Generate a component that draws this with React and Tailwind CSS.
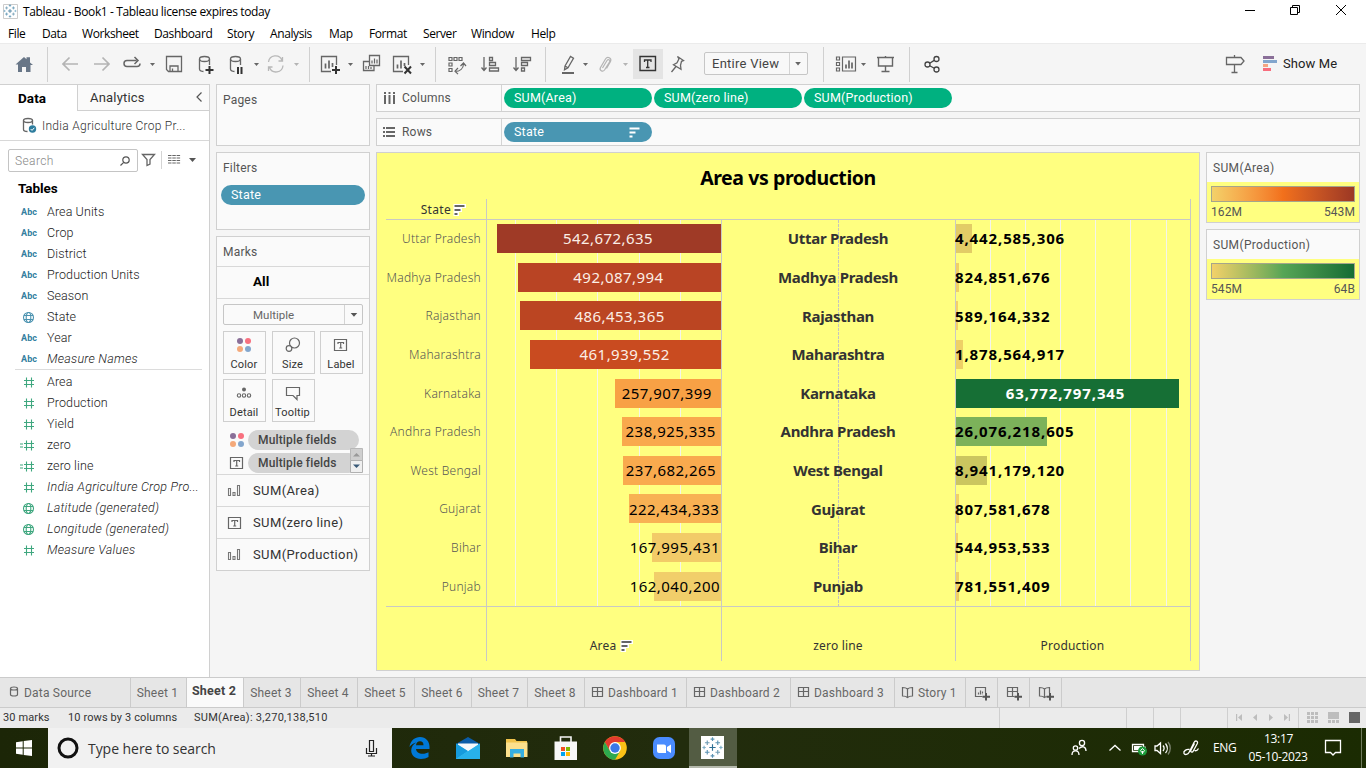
import React from "react";

const cx = (...a) => a.filter(Boolean).join(" ");

/* Icon cell whose drawing coordinates are window coordinates. */
function Cell({ x, y = 43, w, h = 41, className, children }) {
  return (
    <svg
      width={w}
      height={h}
      viewBox={`${x} ${y} ${w} ${h}`}
      fill="none"
      stroke="#666"
      strokeWidth="1.3"
      className={cx("block shrink-0", className)}
    >
      {children}
    </svg>
  );
}

const Caret = ({ x, y = 64, c = "#666" }) => (
  <path d={`M${x - 2.5} ${y - 1}h5l-2.5 3z`} fill={c} stroke="none" />
);
const Sep = ({ x }) => <path d={`M${x}.5 47v35`} stroke="#d0d0d0" strokeWidth="1" />;

function TableauMark({ x, y, s = 1 }) {
  const plus = (px, py, r, c) => (
    <path key={`${px},${py}`} d={`M${px - r} ${py}h${2 * r}M${px} ${py - r}v${2 * r}`} stroke={c} strokeWidth="1.1" />
  );
  return (
    <g transform={`translate(${x} ${y}) scale(${s})`}>
      {plus(0, 0, 3, "#2f6f94")}
      {plus(-5, -4.5, 2.2, "#6f9cb4")}
      {plus(5, -4.5, 2.2, "#5b93b3")}
      {plus(-5, 4.5, 2.2, "#5b93b3")}
      {plus(5, 4.5, 2.2, "#6f9cb4")}
      {plus(0, -8, 1.8, "#5b93b3")}
      {plus(0, 8, 1.8, "#5b93b3")}
      {plus(-8, 0, 1.6, "#7fb0c8")}
      {plus(8, 0, 1.6, "#7fb0c8")}
    </g>
  );
}

function TitleBar() {
  return (
    <div className="flex h-[23px] items-center bg-white">
      <Cell x={0} y={0} w={23} h={23}>
        <path d="M3.5 4.5h14v14h-14z" fill="#fff" stroke="#ccc" strokeWidth="1" />
        <TableauMark x={10} y={11} s={0.68} />
      </Cell>
      <span className="pt-[1px] text-[12px] tracking-[-0.37px] text-black">Tableau - Book1 - Tableau license expires today</span>
      <Cell x={1230} y={0} w={136} h={23} className="ml-auto">
        <g stroke="#000" strokeWidth="1">
          <path d="M1245 10.5h10" />
          <path d="M1290.500 7.500h7v7h-7zM1292.500 7v-1.500h7v7h-1.500" />
          <path d="M1336 5l10 10M1346 5l-10 10" />
        </g>
      </Cell>
    </div>
  );
}

const MENU = [
  ["File", "w-[34px]"],
  ["Data", "w-[40px]"],
  ["Worksheet", "w-[72px]"],
  ["Dashboard", "w-[73px]"],
  ["Story", "w-[43px]"],
  ["Analysis", "w-[59px]"],
  ["Map", "w-[40px]"],
  ["Format", "w-[54px]"],
  ["Server", "w-[48px]"],
  ["Window", "w-[60px]"],
  ["Help", "w-[40px]"],
];

function MenuBar() {
  return (
    <div className="flex h-[20px] items-center bg-white pl-2 pt-[2px] text-[12px] tracking-[-0.4px] text-black">
      {MENU.map(([t, w]) => (
        <span key={t} className={cx("shrink-0", w)}>{t}</span>
      ))}
    </div>
  );
}

function Toolbar() {
  return (
    <div className="flex h-[41px] border-t border-[#ebebeb] bg-[#f5f5f5]">
      <Cell x={0} y={44} h={40} w={62}>
        <path d="M15.500 64.500L24 57l2.500 2.200v-2h3.500v5.200l3 2.600h-2.500v7h-4.500v-5h-4v5h-4v-7.500z" fill="#687687" stroke="none" />
        <Sep x={47} />
      </Cell>
      <Cell x={62} y={44} h={40} w={56}>
        <path d="M78 64H63M69.500 57.500L63 64l6.500 6.500M94 64h15M102.500 57.500L109 64l-6.500 6.500" stroke="#b4b4b4" strokeWidth="1.7" />
      </Cell>
      <Cell x={118} y={44} h={40} w={44}>
        <path d="M131 66.500h-4a3 3 0 010-6h9.500M130 66.500h7a3 3 0 003-3M134.500 57l3.500 3.500-3.500 3.500" strokeWidth="1.500" />
        <Caret x={152.500} />
      </Cell>
      <Cell x={162} y={44} h={40} w={30}>
        <path d="M166.500 56.500h15v15h-13l-2-2zM170 71v-5h8v5M172.500 68.500v3" />
      </Cell>
      <Cell x={192} y={44} h={40} w={30}>
        <ellipse cx="204.500" cy="59" rx="5" ry="2.500" />
        <path d="M199.500 59v10c0 1.400 1.600 2.300 4 2.500M209.500 59v6" />
        <path d="M209.500 66v8M205.500 70h8" stroke="#333" strokeWidth="2" />
      </Cell>
      <Cell x={222} y={44} h={40} w={42}>
        <ellipse cx="235.500" cy="59" rx="5" ry="2.500" />
        <path d="M230.500 59v10c0 1.400 1.600 2.300 4 2.500M240.500 59v6" />
        <path d="M238 67v7M241.500 67v7" stroke="#333" strokeWidth="2" />
        <Caret x={256.500} />
      </Cell>
      <Cell x={264} y={44} h={40} w={50}>
        <path d="M268.500 62a7 7 0 0113.500-1.500M283 65.500a7 7 0 01-13.500 2M282.500 57v4h-4M268.500 71v-4h4" stroke="#b8b8b8" />
        <Caret x={296.500} c="#b4b4b4" />
        <Sep x={309} />
      </Cell>
      <Cell x={314} y={44} h={40} w={44}>
        <path d="M331 71.500h-9.500v-15h15V65" />
        <path d="M325.500 68.500v-5M329 68.500v-8M332.500 67v-4" strokeWidth="1.700" />
        <path d="M336 66v8M332 70h8" stroke="#333" strokeWidth="2" />
        <Caret x={350.500} />
      </Cell>
      <Cell x={358} y={44} h={40} w={28}>
        <path d="M369.500 55.500h10v10h-10zM369 61.500h-5.500v9h10.500v-5" />
        <path d="M372 63.500v-3M374.500 63.500v-5M377 63.500v-4M366 69v-3M368.500 69v-3M371 69v-2" strokeWidth="1.200" />
      </Cell>
      <Cell x={386} y={44} h={40} w={58}>
        <path d="M403 71.500h-9.500v-15h15V65" />
        <path d="M397.500 68.500v-4M401 68.500v-8M404.500 66v-3" strokeWidth="1.700" />
        <path d="M404.500 66.500l6.500 7M411 66.500l-6.500 7" stroke="#333" strokeWidth="2" />
        <Caret x={422.500} />
        <Sep x={435} />
      </Cell>
      <Cell x={444} y={44} h={40} w={30}>
        <path d="M449 57.500h3v3h-3zM454 57.500h3v3h-3zM459 57.500h3v3h-3zM449 63h3v3h-3zM449 68.500h3v3h-3zM455 71.500c5 0 8.500-3 8.500-8M458 68l-3 3.200 3 3M460.500 66l3-3 2.500 3" strokeWidth="1.200" />
      </Cell>
      <Cell x={474} y={44} h={40} w={32}>
        <path d="M484 57v13M481.500 67.500l2.500 3 2.500-3M489.500 57.500h3v3h-3zM489.500 62.500h6v3h-6zM489.500 68h9v3h-9z" />
      </Cell>
      <Cell x={506} y={44} h={40} w={44}>
        <path d="M516 57v13M513.500 67.500l2.500 3 2.500-3M521.500 57.500h9v3h-9zM521.500 62.500h6v3h-6zM521.500 68h3v3h-3z" />
        <Sep x={545} />
      </Cell>
      <Cell x={550} y={44} h={40} w={42}>
        <path d="M565 66l5.500-9.500 3 1.800-5.500 9.500-3.500 2zM565 66l3 1.800" />
        <path d="M562 73h12" strokeWidth="2" />
        <Caret x={585.500} />
      </Cell>
      <Cell x={592} y={44} h={40} w={41}>
        <path d="M602.500 68l4.500-7.500c1.200-1.800 3.500-.5 2.500 1.500l-5 8c-1.800 2.500-5.500.5-4-2.500l5-8.500c2-3 6.500-1 5 2.500l-4 7" stroke="#b4b4b4" strokeWidth="1.200" />
        <Caret x={625.500} c="#b4b4b4" />
      </Cell>
      <div className="mt-[5px] h-[30px]">
        <Cell x={633} y={49} h={30} w={30} className="bg-[#e4e4e4]">
          <path d="M640 56.500h15.500v14H640z" stroke="#333" strokeWidth="1.400" />
          <path d="M644.500 62v-2h6.500v2M647.700 60v7.500M646 67.500h3.500" stroke="#333" />
        </Cell>
      </div>
      <Cell x={663} y={44} h={40} w={41}>
        <path d="M677.500 56.500l6 4-2 .8-1 4 .5 4-7.500-4.500 3.500-2 2-4zM676 66.500l-4.500 5.500" />
      </Cell>
      <div className="mt-[8px] flex h-[23px] w-[104px] rounded-[2px] border border-[#c6c6c6] bg-[#f8f8f8]">
        <span className="flex h-full w-[84px] items-center pl-[7px] text-[13px] tracking-[0.25px] text-[#444]">Entire View</span>
        <Cell x={789} y={53} w={18} h={21} className="border-l border-[#d4d4d4]">
          <path d="M794.500 62h6l-3 3.500z" fill="#666" stroke="none" />
        </Cell>
      </div>
      <Cell x={808} y={44} h={40} w={64}>
        <Sep x={823} />
        <path d="M836.500 57h3v3h-3zM836.500 62.500h3v3h-3zM836.500 68h3v3h-3zM842.500 57h13v14h-13z" strokeWidth="1.200" />
        <path d="M846 68.500v-4M849 68.500v-8M852 68.500v-6" strokeWidth="1.700" />
        <Caret x={863.500} />
      </Cell>
      <Cell x={872} y={44} h={40} w={42}>
        <path d="M877 57.500h17M878.500 57.500v8.500h14v-8.500M885.500 66v5M881.500 71.500h8M885.500 56v1" strokeWidth="1.400" />
        <Sep x={909} />
      </Cell>
      <Cell x={914} y={44} h={40} w={40}>
        <circle cx="927.500" cy="64.500" r="2.500" stroke="#444" />
        <circle cx="936.500" cy="59" r="2.500" stroke="#444" />
        <circle cx="936.500" cy="69.500" r="2.500" stroke="#444" />
        <path d="M929.700 63.200l4.500-2.800M929.700 65.800l4.600 2.500" stroke="#444" />
      </Cell>
      <Cell x={1216} y={44} h={40} w={67} className="ml-auto">
        <path d="M1226.500 57.500h14.500l3 3.500-3 3.500h-14.500zM1234.500 55v2.500M1234.500 64.500v8M1231.500 72.500h6" />
        <path d="M1263 56h11v3h-11z" fill="#8a6f98" stroke="none" />
        <path d="M1263 60h14v3h-14z" fill="#83a6cd" stroke="none" />
        <path d="M1263 64h5v3h-5z" fill="#f4a582" stroke="none" />
        <path d="M1263 68h8v3h-8z" fill="#f86d7d" stroke="none" />
      </Cell>
      <span className="flex h-[40px] w-[83px] items-center text-[13px] tracking-[0.1px] text-[#222]">Show Me</span>
    </div>
  );
}

const FIELDS = [
  ["abc", "Area Units"],
  ["abc", "Crop"],
  ["abc", "District"],
  ["abc", "Production Units"],
  ["abc", "Season"],
  ["globe", "State"],
  ["abc", "Year"],
  ["abc", "Measure Names", true],
];
const MEASURES = [
  ["num", "Area"],
  ["num", "Production"],
  ["num", "Yield"],
  ["calc", "zero"],
  ["calc", "zero line"],
  ["num", "India Agriculture Crop Pro...", true],
  ["globe", "Latitude (generated)", true],
  ["globe", "Longitude (generated)", true],
  ["num", "Measure Values", true],
];

function FieldIcon({ kind, color }) {
  if (kind === "abc")
    return <span className="w-[29px] shrink-0 pl-[3px] pt-[3px] text-[9px] font-bold tracking-[0.1px] text-[#33809f]">Abc</span>;
  return (
    <svg width="29" height="20" viewBox="18 0 29 20" fill="none" stroke={color} strokeWidth="1.1" className="block shrink-0">
      {kind === "globe" ? (
        <>
          <circle cx="28.500" cy="10.500" r="5" />
          <ellipse cx="28.500" cy="10.500" rx="2.300" ry="5" />
          <path d="M24 8.500h9M24 12.500h9" />
        </>
      ) : (
        <path d="M26.500 5.500v10M31.500 5.500v10M24 8.500h10M24 12.500h10" />
      )}
      {kind === "calc" && <path d="M20 9h3M20 12h3" />}
    </svg>
  );
}

function FieldList({ items, color }) {
  return items.map(([kind, label, italic]) => (
    <div key={label} className="flex h-[21px] items-center pl-[18px]">
      <FieldIcon kind={kind} color={color} />
      <span className={cx("whitespace-nowrap pt-[2px] text-[12.5px] text-[#222] font-light", italic ? "italic tracking-[0.25px]" : "tracking-[0.1px]")}>{label}</span>
    </div>
  ));
}

function DataPane() {
  return (
    <div className="flex w-[210px] shrink-0 flex-col border-r border-t border-[#d0d0d0] bg-white">
      <div className="flex h-[26px]">
        <span className="flex w-[77px] items-center pl-[18px] text-[13.500px] font-bold tracking-[0.1px] text-black">Data</span>
        <div className="flex grow items-center border-b border-l border-[#d0d0d0] bg-[#fafafa] pl-[12px]">
          <span className="text-[13px] tracking-[0.2px] text-[#333]">Analytics</span>
          <svg width="8" height="12" viewBox="0 0 8 12" fill="none" stroke="#555" strokeWidth="1.200" className="mb-[2px] ml-auto mr-[6px]">
            <path d="M6.500 1.500L2 6l4.500 4.500" />
          </svg>
        </div>
      </div>
      <div className="flex h-[30px] items-center border-b border-[#d8d8d8]">
        <Cell x={0} y={111} w={42} h={29}>
          <ellipse cx="28" cy="120.500" rx="4.500" ry="2" />
          <path d="M23.500 120.500v9c0 1.200 1.500 2 4 2M32.500 120.500v4" />
          <circle cx="32.500" cy="129" r="3.700" fill="#2e7d9e" stroke="none" />
          <path d="M30.700 129l1.300 1.400 2.300-2.600" stroke="#fff" strokeWidth="1" />
        </Cell>
        <span className="text-[12px] font-light tracking-[0.28px] text-[#333]">India Agriculture Crop Pr...</span>
      </div>
      <div className="mt-[8px] flex h-[23px] items-center pl-[8px]">
        <div className="flex h-[23px] w-[130px] items-center rounded-[2px] border border-[#c4c4c4] pl-[6px] text-[12px] font-light tracking-[0.4px] text-[#888]">
          Search
          <svg width="12" height="12" viewBox="0 0 12 12" fill="none" stroke="#555" strokeWidth="1.200" className="ml-auto mr-[6px]">
            <circle cx="7" cy="5" r="3.200" />
            <path d="M4.700 7.300L1.500 10.500" />
          </svg>
        </div>
        <Cell x={138} y={149} w={71} h={23}>
          <path d="M142.500 154.500h12l-4.500 5v4.500l-3 1.500v-6z" />
          <path d="M161.500 151v18" stroke="#d4d4d4" strokeWidth="1" />
          <path d="M168 155.500h12.500M168 158h12.500M168 160.500h12.500M168 163h12.500" strokeDasharray="3.500 .8" strokeWidth="1" />
          <path d="M189 158h7l-3.500 4z" fill="#555" stroke="none" />
        </Cell>
      </div>
      <span className="mt-[6px] h-[23px] pl-[18px] text-[13.500px] font-bold leading-[21px] tracking-[-0.05px] text-black">Tables</span>
      <FieldList items={FIELDS} color="#4c93b0" />
      <div className="ml-[15px] mr-[7px] mb-[1px] h-px bg-[#dcdcdc]" />
      <FieldList items={MEASURES} color="#3fa77f" />
    </div>
  );
}

function Dots() {
  return (
    <svg width="16" height="16" viewBox="0 0 16 16" className="block shrink-0">
      <circle cx="4" cy="4" r="3" fill="#8a6f98" />
      <circle cx="12" cy="4" r="3" fill="#f8707f" />
      <circle cx="4" cy="12" r="3" fill="#f4a97a" />
      <circle cx="12" cy="12" r="3" fill="#83a6cd" />
    </svg>
  );
}

function TBox() {
  return (
    <svg width="16" height="16" viewBox="0 0 16 16" fill="none" stroke="#666" strokeWidth="1.200" className="block shrink-0">
      <path d="M1.500 2.500h12v11h-12zM5 7V5.500h5.500V7M7.700 5.500v5.500M6.200 11h3" />
    </svg>
  );
}

function BarsIcon() {
  return (
    <svg width="16" height="16" viewBox="0 0 16 16" fill="none" stroke="#777" strokeWidth="1.100" className="block shrink-0">
      <path d="M1.500 5.500h2v7h-2zM6 9.500h2v3H6zM10.500 2.500h2v10h-2z" />
    </svg>
  );
}

function MarkButton({ label, children }) {
  return (
    <div className="flex h-[43px] w-[43px] flex-col items-center border border-[#cfcfcf] bg-[#fafafa] pr-[1px] pt-[5px]">
      {children}
      <span className="mt-[5px] whitespace-nowrap text-[11px] leading-[14px] tracking-[0.15px] text-[#333]">{label}</span>
    </div>
  );
}

const Card = ({ className, children }) => (
  <div className={cx("border border-[#d0d0d0] bg-[#fafafa]", className)}>{children}</div>
);

function ShelfColumn() {
  return (
    <div className="flex w-[154px] shrink-0 flex-col gap-[6px]">
      <Card className="h-[62px] pl-[6px] pt-[5px] text-[12px] leading-[21px] tracking-[0.2px] text-[#555]">Pages</Card>
      <Card className="h-[78px] px-[4px] pt-[5px]">
        <div className="pl-[2px] text-[12px] leading-[21px] tracking-[0.2px] text-[#555]">Filters</div>
        <div className="mt-[6px] flex h-[20px] items-center rounded-full bg-[#4996b2] pl-[10px] text-[12.500px] tracking-[0.2px] text-white">State</div>
      </Card>
      <Card className="h-[335px]">
        <div className="h-[30px] border-b border-[#d8d8d8] pl-[6px] text-[12px] leading-[30px] tracking-[0.2px] text-[#555]">Marks</div>
        <div className="h-[32px] border-b border-[#d8d8d8] pl-[36px] text-[13.500px] font-bold leading-[29px] text-black">All</div>
        <div className="px-[6px] pt-[5px]">
          <div className="flex h-[21px] rounded-[2px] border border-[#c6c6c6]">
            <span className="w-[120px] pl-[29px] text-[11.500px] leading-[20px] text-[#666]">Multiple</span>
            <Cell x={344} y={305} w={18} h={19} className="border-l border-[#d4d4d4]">
              <path d="M350 313h7l-3.500 4z" fill="#555" stroke="none" />
            </Cell>
          </div>
          <div className="mt-[6px] grid grid-cols-[43px_43px_43px] gap-x-[5.500px] gap-y-[5px]">
            <MarkButton label="Color"><Dots /></MarkButton>
            <MarkButton label="Size">
              <svg width="16" height="16" viewBox="0 0 16 16" fill="none" stroke="#666" strokeWidth="1.200">
                <circle cx="9.500" cy="6" r="5" />
                <circle cx="4" cy="11.500" r="2.800" fill="#fafafa" />
              </svg>
            </MarkButton>
            <MarkButton label="Label"><TBox /></MarkButton>
            <MarkButton label="Detail">
              <svg width="16" height="16" viewBox="0 0 16 16" fill="none" stroke="#666" strokeWidth="1.100">
                <circle cx="8" cy="4.500" r="2" fill="#666" stroke="none" />
                <circle cx="3" cy="10.500" r="1.700" />
                <circle cx="8" cy="10.500" r="1.700" />
                <circle cx="13" cy="10.500" r="1.700" />
              </svg>
            </MarkButton>
            <MarkButton label="Tooltip">
              <svg width="16" height="16" viewBox="0 0 16 16" fill="none" stroke="#666" strokeWidth="1.200">
                <path d="M1.500 2.500h13v8h-2.500v4l-4-4h-6.500z" />
              </svg>
            </MarkButton>
          </div>
          <div className="relative mt-[8px] flex flex-col gap-[3px] text-[12px] font-medium tracking-[0.15px] text-[#444]">
            <div className="flex items-center gap-[4px] pl-[6px]">
              <Dots />
              <span className="ml-[-1px] flex h-[20px] w-[111px] items-center rounded-full bg-[#d3d3d3] pl-[10px]">Multiple fields</span>
            </div>
            <div className="flex items-center gap-[4px] pl-[6px]">
              <TBox />
              <span className="ml-[-1px] flex h-[20px] w-[111px] items-center rounded-full bg-[#d3d3d3] pl-[10px]">Multiple fields</span>
            </div>
            <svg width="13" height="25" viewBox="0 0 13 25" className="absolute right-0 bottom-0">
              <path d="M.5.500h12v12H.5z" fill="#cfcfcf" stroke="#b8b8b8" />
              <path d="M.5 12.500h12v12H.5z" fill="#efefef" stroke="#b0b0b0" />
              <path d="M3 8.500h7L6.500 5z" fill="#999" />
              <path d="M3 16.500h7L6.500 20z" fill="#3a5a78" />
            </svg>
          </div>
        </div>
        <div className="mt-px">
          {["SUM(Area)", "SUM(zero line)", "SUM(Production)"].map((t, i) => (
            <div key={t} className="flex h-[32px] items-center gap-[10px] border-t border-[#d8d8d8] pl-[10px] text-[13px] tracking-[0.38px] text-[#333]">
              {i === 1 ? <TBox /> : <BarsIcon />}
              {t}
            </div>
          ))}
        </div>
      </Card>
    </div>
  );
}

function Shelf({ label, icon, children }) {
  return (
    <Card className="flex h-[28px]">
      <div className="flex w-[125px] shrink-0 items-center gap-[5px] border-r border-[#d4d4d4] pl-[6px] text-[12px] tracking-[0.2px] text-[#555]">
        <svg width="14" height="14" viewBox="0 0 14 14" fill="#666">{icon}</svg>
        {label}
      </div>
      <div className="flex items-center gap-[2px] pl-[2px]">{children}</div>
    </Card>
  );
}

const Pill = ({ color, children }) => (
  <span className={cx("flex h-[20px] w-[148px] items-center rounded-full pl-[10px] pr-[12px] text-[12.500px] tracking-[0.2px] text-white", color)}>
    {children}
  </span>
);

const SortIcon = () => (
  <svg width="14" height="12" viewBox="0 0 14 12" className="block shrink-0">
    <path d="M.5 0h12.500v4H9v4H6v4H.5z" fill="#fff" />
    <path d="M1.500 1h10v2h-10zM1.500 5h6v2h-6zM1.500 9h3v2h-3z" fill="#666" />
  </svg>
);

const AREA_MAX = 542672635;
const PROD_MAX = 63772797345;
const ROWS = [
  ["Uttar Pradesh", 542672635, "bg-[#9f3a26]", 4442585306, "bg-[#e2cc66]"],
  ["Madhya Pradesh", 492087994, "bg-[#b94424]", 824851676, "bg-[#f0d066]"],
  ["Rajasthan", 486453365, "bg-[#bb4522]", 589164332, "bg-[#f3d068]"],
  ["Maharashtra", 461939552, "bg-[#c94b20]", 1878564917, "bg-[#eed066]"],
  ["Karnataka", 257907399, "bg-[#f8a145]", 63772797345, "bg-[#166f35]"],
  ["Andhra Pradesh", 238925335, "bg-[#f9a94d]", 26076218605, "bg-[#7cb25a]"],
  ["West Bengal", 237682265, "bg-[#f9aa4e]", 8941179120, "bg-[#cbc65f]"],
  ["Gujarat", 222434333, "bg-[#f8b153]", 807581678, "bg-[#f0d066]"],
  ["Bihar", 167995431, "bg-[#f2cb68]", 544953533, "bg-[#f3d068]"],
  ["Punjab", 162040200, "bg-[#f1ce6a]", 781551409, "bg-[#f0d066]"],
];

function Viz() {
  return (
    <div className="h-[519px] w-[824px] shrink-0 border border-[#d0d0d0] bg-[#ffff80] pl-[9px] font-['Noto_Sans',sans-serif]">
      <div className="h-[46px] w-[804px] pt-[10px] text-center text-[19.500px] font-bold leading-[30px] tracking-[-0.42px] text-black">Area vs production</div>
      <div className="relative h-[462px] w-[805px]">
        <svg width="805" height="462" viewBox="386 199 805 462" fill="none" className="absolute inset-0">
          <path d="M515.500 220v386M556.500 220v386M597.500 220v386M639.500 220v386M680.500 220v386M990.500 220v386M1025.500 220v386M1060.500 220v386M1095.500 220v386M1130.500 220v386M1166.500 220v386" stroke="#f4f4ec" />
          <path d="M838.500 220v386" stroke="#c4c4c0" strokeDasharray="3 1" />
          <path d="M386 219.500h804M386 606.500h804M486.500 199v462M721.500 219v442M955.500 219v442M1190.500 199v462" stroke="#c9c9c4" />
        </svg>
        <div className="relative flex h-[21px] w-[100px] items-center justify-end gap-[2px] pr-[19px] pt-[1px] text-[12px] tracking-[0.3px] text-[#333]">
          State
          <SortIcon />
        </div>
        {ROWS.map(([name, area, areaColor, prod, prodColor]) => (
          <div key={name} className="relative flex h-[38.65px] pt-[4px] text-[15px]">
            <span className="flex h-[30px] w-[95px] shrink-0 items-center justify-end whitespace-nowrap text-[12px] font-light tracking-[0.25px] text-[#555]">{name}</span>
            <div className="flex w-[240px] shrink-0 justify-end">
              <div
                className={cx(
                  "flex h-[29px] items-center tracking-[0.45px]",
                  areaColor,
                  area < 200000000 ? "justify-end pr-[1px]" : "justify-center pr-[2px]",
                  area > 400000000 ? "text-[#fbefe6]" : "text-black"
                )}
                style={{ width: (area / AREA_MAX) * 224 }}
              >
                {area.toLocaleString("en-US")}
              </div>
            </div>
            <span className="flex h-[29px] w-[234px] shrink-0 items-center justify-center font-bold tracking-[-0.3px] text-[#333]">{name}</span>
            <div
              className={cx(
                "ml-[1px] flex h-[29px] items-center whitespace-nowrap font-bold tracking-[0.88px]",
                prodColor,
                prod === PROD_MAX ? "justify-center pr-[3px] text-white" : "justify-start text-black"
              )}
              style={{ width: (prod / PROD_MAX) * 223 }}
            >
              <span className="ml-[-1px]">{prod.toLocaleString("en-US")}</span>
            </div>
          </div>
        ))}
        <div className="relative mt-[30px] flex pl-[100px] text-[12px] leading-[20px] tracking-[0.2px] text-[#333]">
          <span className="flex w-[235px] items-center justify-center gap-[4px] pl-[17px]">Area <SortIcon /></span>
          <span className="w-[234px] text-center">zero line</span>
          <span className="w-[235px] text-center">Production</span>
        </div>
      </div>
    </div>
  );
}

function Legend({ title, lo, hi, gradient }) {
  return (
    <Card className="h-[71px]">
      <div className="h-[29px] pl-[6px] text-[12px] leading-[31px] tracking-[0.35px] text-[#555]">{title}</div>
      <div className="h-[40px] bg-[#ffff80] px-[4px] pt-[4px]">
        <div className={cx("h-[16px] border border-[#a5a58c]", gradient)} />
        <div className="flex justify-between text-[12px] leading-[20px] tracking-[0.1px] text-[#555]">
          <span>{lo}</span>
          <span>{hi}</span>
        </div>
      </div>
    </Card>
  );
}

function TabIcon({ kind, plus }) {
  const d = {
    source: "M2.500 4.500c0-1 1.500-1.500 3.500-1.500s3.500.5 3.500 1.500v6c0 1-1.500 1.500-3.500 1.500s-3.500-.5-3.500-1.500zM2.500 4.500c0 1 1.500 1.500 3.500 1.500s3.500-.5 3.500-1.500",
    dash: "M1.500 3.500h10v9h-10zM6.500 3.500v9M1.500 7.500h10",
    story: "M1.500 3.500c2 0 4 .5 5 1.500 1-1 3-1.500 5-1.500v8.500c-2 0-4 .5-5 1.500-1-1-3-1.500-5-1.500zM6.500 5v8",
    sheet: "M1.500 3.500h10v9h-10zM4.500 10.500v-2M6.500 10.500v-4M8.500 10.500v-3",
  }[kind];
  return (
    <svg width="17" height="17" viewBox="0 0 17 17" fill="none" stroke="#666" strokeWidth="1.200" className="block shrink-0">
      <path d={d} />
      {plus && <path d="M8.500 9h7v7h-7z" fill="#e6e6e6" stroke="none" />}
      {plus && <path d="M12 9v7.500M8.500 12.800h7.500" stroke="#555" strokeWidth="2" />}
    </svg>
  );
}

const TABS = [
  ["Sheet 1", "w-[56px]"],
  ["Sheet 2", "w-[57px]", null, true],
  ["Sheet 3", "w-[57px]"],
  ["Sheet 4", "w-[57px]"],
  ["Sheet 5", "w-[57px]"],
  ["Sheet 6", "w-[57px]"],
  ["Sheet 7", "w-[56px]"],
  ["Sheet 8", "w-[57px]"],
  ["Dashboard 1", "w-[102px]", "dash"],
  ["Dashboard 2", "w-[104px]", "dash"],
  ["Dashboard 3", "w-[104px]", "dash"],
  ["Story 1", "w-[71px]", "story"],
];

function SheetTabs() {
  return (
    <div className="flex h-[31px] border-y border-[#cbcbcb] bg-[#e6e6e6] text-[12px] tracking-[0.2px] text-[#666]">
      <div className="flex w-[131px] items-center border-r border-[#cbcbcb] pl-[8px]">
        <TabIcon kind="source" />
        <span className="ml-[-1px]">Data Source</span>
      </div>
      {TABS.map(([t, w, icon, active]) => (
        <div
          key={t}
          className={cx(
            "flex shrink-0 items-center whitespace-nowrap border-r border-[#cbcbcb]",
            w,
            icon ? "pl-[6px]" : "justify-center pr-[2px]",
            active && "bg-[#fafafa] pb-[2px] text-[12.500px] font-bold text-[#444]"
          )}
        >
          {icon && <TabIcon kind={icon} />}
          {t}
        </div>
      ))}
      {["sheet", "dash", "story"].map((k) => (
        <div key={k} className="flex w-[32px] shrink-0 items-center border-r border-[#cbcbcb] pl-[8px]">
          <TabIcon kind={k} plus />
        </div>
      ))}
    </div>
  );
}

function StatusBar() {
  const squares = [];
  for (let r = 0; r < 3; r++) for (let c = 0; c < 3; c++) squares.push([1307 + c * 4, 712 + r * 4]);
  return (
    <div className="flex h-[20px] items-center bg-[#ebebeb] text-[11px] tracking-[0.12px] text-[#333]">
      <span className="w-[65px] pl-[3px] pt-[1px]">30 marks</span>
      <span className="w-[126px] pl-[3px] pt-[1px]">10 rows by 3 columns</span>
      <span className="pl-[3px] pt-[1px] tracking-[0.27px]">SUM(Area): 3,270,138,510</span>
      <Cell x={990} y={708} w={376} h={20} className="ml-auto">
        <path d="M999.500 708v20M1126.500 708v20M1153.500 708v20M1180.500 708v20M1227.500 708v20M1298.500 708v20" stroke="#cfcfcf" strokeWidth="1" />
        <g fill="#bdbdbd" stroke="none">
          <path d="M1236 714h1.200v7h-1.200zM1242 714v7l-4-3.500zM1257 714v7l-4-3.500zM1269 714v7l4-3.500zM1284 714v7l4-3.500zM1288.800 714h1.200v7h-1.200z" />
          {squares.map(([a, b]) => <rect key={`${a}-${b}`} x={a} y={b} width="3" height="3" />)}
          <path d="M1328 712h11v7h-11zM1328 720h3v3h-3zM1332 720h3v3h-3zM1336 720h3v3h-3z" />
        </g>
        <rect x="1349" y="712" width="11" height="11" fill="#666" stroke="none" />
      </Cell>
    </div>
  );
}

const Task = (p) => <Cell y={728} h={40} {...p} />;

function Taskbar() {
  return (
    <div className="flex h-[40px] bg-linear-to-r from-[#1c2607] via-[#222c0d] to-[#1b2b02] text-white">
      <Task x={0} w={48}>
        <path d="M16 742.300l6.700-1v6.200H16zM23.700 741.100l8.300-1.200v7.600h-8.300zM16 748.500h6.700v6.200l-6.700-1zM23.700 748.500h8.300v7.600l-8.300-1.200z" fill="#fff" stroke="none" />
      </Task>
      <div className="flex w-[344px] items-center bg-[#f1f1f1] text-[14px] tracking-[-0.05px] text-[#333]">
        <Task x={48} w={40}>
          <circle cx="68" cy="748" r="9" stroke="#111" strokeWidth="3" />
        </Task>
        Type here to search
        <Task x={360} w={32} className="ml-auto">
          <path d="M369.500 740.500h4v11h-4zM366.500 748v5.500h10V748M371.500 753.500v2.500M368 756h7" stroke="#222" strokeWidth="1.200" />
        </Task>
      </div>
      <Task x={392} w={51}>
        <path d="M409.500 747c.8-6.500 5.500-10 10.500-10 6 0 9.500 4.500 9.500 9.500v2.500h-13.500c.2 3 3 4.800 6.500 4.800 2.500 0 4.500-.6 6-1.500v4.800c-2 1.200-4.500 1.900-7.500 1.900-6 0-9.800-3.800-9.800-8.500 0-3.500 2-6.500 5-8-3 .8-5.200 2.500-6.700 4.500zM416 745.200h7.500c0-2.500-1.200-4-3.500-4-2.200 0-3.700 1.500-4 4z" fill="#0078d7" fillRule="evenodd" stroke="none" />
      </Task>
      <Task x={443} w={50}>
        <g stroke="none">
          <path d="M456 744l12-7 12 7v4h-24z" fill="#0a5ca8" />
          <path d="M458 743.500h20v9h-20z" fill="#f4f8fb" />
          <path d="M456 743.500l12 8 12-8V759h-24z" fill="#35c0f2" />
          <path d="M456 743.500V759l12-8z" fill="#169bdc" />
          <path d="M456 759l24-15.500V759z" fill="#28b1ea" />
        </g>
      </Task>
      <Task x={493} w={49}>
        <g stroke="none">
          <path d="M506 739h9l1.500 2h10.500v16h-21z" fill="#f0c34c" />
          <path d="M506 742.500h21.500V757H506z" fill="#fbe08d" />
          <path d="M510 749h14v8.500h-3.500v-4h-7v4H510z" fill="#35aee2" />
        </g>
      </Task>
      <Task x={542} w={48}>
        <path d="M560.500 743v-6h10.500v6" stroke="#f5f5f5" strokeWidth="1.600" />
        <path d="M554.500 741.500h22.500V760h-22.500z" fill="#f7f7f7" stroke="none" />
        <path d="M561 747h4v4h-4z" fill="#f25022" stroke="none" />
        <path d="M566 747h4v4h-4z" fill="#7fba00" stroke="none" />
        <path d="M561 752h4v4h-4z" fill="#00a4ef" stroke="none" />
        <path d="M566 752h4v4h-4z" fill="#ffb900" stroke="none" />
      </Task>
      <Task x={590} w={50}>
        <g stroke="none">
          <circle cx="615" cy="748" r="11.800" fill="#fbc116" />
          <path d="M604.800 742.100a11.800 11.800 0 0120.400 0H615l-5.100 8.800z" fill="#e33b2e" />
          <path d="M604.800 742.100a11.800 11.800 0 0010.200 17.700l5.100-8.900-10.200 0z" fill="#2da94f" />
          <circle cx="615" cy="748" r="5.900" fill="#fff" />
          <circle cx="615" cy="748" r="4.700" fill="#3b78e7" />
        </g>
      </Task>
      <Task x={640} w={49}>
        <rect x="653" y="737" width="22" height="22" rx="6.500" fill="#4a8cff" stroke="none" />
        <path d="M657 744.500h7a2 2 0 012 2v6.500h-7a2 2 0 01-2-2zM667 747l4-2.500v8.500l-4-2.500z" fill="#fff" stroke="none" />
      </Task>
      <Task x={689} w={48} className="bg-[#535c43]">
        <path d="M701 736h23v23h-23z" fill="#fff" stroke="none" />
        <TableauMark x={712.5} y={747.5} s={1.05} />
        <path d="M689 766h48v2h-48z" fill="#b4b8ac" stroke="none" />
      </Task>
      <Task x={1064} w={149} className="ml-auto">
        <g stroke="#fff" strokeWidth="1.300">
          <circle cx="1082" cy="743" r="2.600" />
          <circle cx="1075.500" cy="748" r="2.200" />
          <path d="M1072 755c0-5.500 7-5.500 7 0M1079 748.500c3-3 7-2 7 2.500" />
          <path d="M1109.500 750.500l5.500-5 5.500 5" />
          <path d="M1132.500 744.500h11v7h-11zM1145 746.500v3" />
          <path d="M1134 746h8v4h-8z" fill="#fff" stroke="none" />
          <circle cx="1142.500" cy="751" r="4.500" fill="#1c9a3a" stroke="none" />
          <path d="M1142.500 748.500l-2 2.200 2 2.300 2-2.300zM1142.500 751v3" strokeWidth="1" />
          <path d="M1155 746v4.500h2l3.500 3v-10.500l-3.500 3zM1163 745.500c1.200 1.500 1.200 4 0 5.500M1165.500 743.500c2.300 3 2.300 7 0 9.500" />
          <path d="M1168 742c3 3.500 3 9 0 12.500" stroke="#7d8470" />
          <path d="M1189.500 749.500c-3-.8-6.500 1.800-5.500 4 .8 1.800 4 1 5-1l5-10c1.200-2.500 4.500-1.500 3.300 1l-4 7.500c-1 2-3.300 1-2.300-1l3.500-6.500M1194.500 750.500c1.200.5 3-.2 4-2" />
        </g>
      </Task>
      <span className="flex w-[36px] items-center text-[12px] tracking-[-0.3px]">ENG</span>
      <div className="flex w-[57px] flex-col items-center justify-center whitespace-nowrap text-[12px] leading-[18px] tracking-[-0.35px]">
        <span className="pl-[2px]">13:17</span>
        <span className="pl-[1px]">05-10-2023</span>
      </div>
      <Task x={1306} w={60}>
        <path d="M1325.500 740.500h15v12h-5l-2.500 2.500-2.500-2.500h-5z" stroke="#fff" strokeWidth="1.300" />
        <path d="M1361.500 728v40" stroke="#6f7a5c" strokeWidth="1" />
      </Task>
    </div>
  );
}

export default function App() {
  return (
    <div className="flex h-[768px] w-[1366px] flex-col overflow-hidden bg-[#f5f5f5] font-['Open_Sans',sans-serif]">
      <TitleBar />
      <MenuBar />
      <div className="flex flex-col font-['Roboto',sans-serif]">
        <Toolbar />
        <div className="flex h-[593px]">
          <DataPane />
          <div className="flex gap-[6px] pl-[6px]">
            <ShelfColumn />
            <div className="flex w-[984px] flex-col gap-[6px]">
              <Shelf label="Columns" icon={<path d="M1 1h2v2H1zM5.500 1h2v2h-2zM10 1h2v2h-2zM1 4h2v9H1zM5.500 4h2v9h-2zM10 4h2v9h-2z" />}>
                <Pill color="bg-[#00b180]">SUM(Area)</Pill>
                <Pill color="bg-[#00b180]">SUM(zero line)</Pill>
                <Pill color="bg-[#00b180]">SUM(Production)</Pill>
              </Shelf>
              <Shelf label="Rows" icon={<path d="M0 2h2v2H0zM0 6h2v2H0zM0 10h2v2H0zM3 2h9v2H3zM3 6h9v2H3zM3 10h9v2H3z" />}>
                <Pill color="bg-[#4996b2]">
                  State
                  <svg width="11" height="11" viewBox="0 0 11 11" fill="#fff" className="ml-auto">
                    <path d="M.5.500h10v2H.5zM.5 4.500h6v2h-6zM.5 8.500h3v2h-3z" />
                  </svg>
                </Pill>
              </Shelf>
              <div className="flex gap-[6px]">
                <Viz />
                <div className="flex grow flex-col gap-[6px]">
                  <Legend title="SUM(Area)" lo="162M" hi="543M" gradient="bg-linear-to-r from-[#f3d169] via-[#f2701b] to-[#9c3824]" />
                  <Legend title="SUM(Production)" lo="545M" hi="64B" gradient="bg-linear-to-r from-[#f3d169] via-[#56a556] to-[#146c34]" />
                </div>
              </div>
            </div>
          </div>
        </div>
        <SheetTabs />
        <StatusBar />
      </div>
      <Taskbar />
    </div>
  );
}
